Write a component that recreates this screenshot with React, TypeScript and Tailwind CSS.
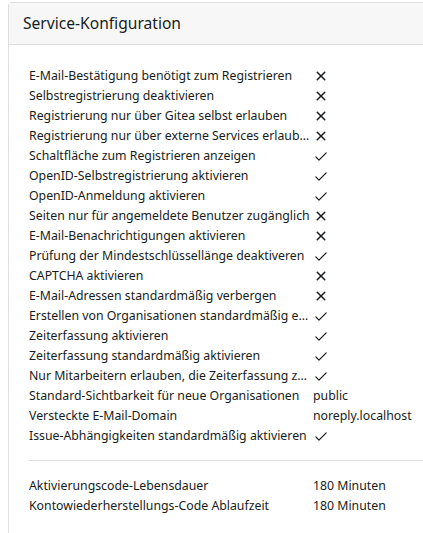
import React from 'react';

type Row = { label: string; value: boolean | string };

const rows: Row[] = [
  { label: 'E-Mail-Bestätigung benötigt zum Registrieren', value: false },
  { label: 'Selbstregistrierung deaktivieren', value: false },
  { label: 'Registrierung nur über Gitea selbst erlauben', value: false },
  { label: 'Registrierung nur über externe Services erlauben', value: false },
  { label: 'Schaltfläche zum Registrieren anzeigen', value: true },
  { label: 'OpenID-Selbstregistrierung aktivieren', value: true },
  { label: 'OpenID-Anmeldung aktivieren', value: true },
  { label: 'Seiten nur für angemeldete Benutzer zugänglich', value: false },
  { label: 'E-Mail-Benachrichtigungen aktivieren', value: false },
  { label: 'Prüfung der Mindestschlüssellänge deaktiveren', value: true },
  { label: 'CAPTCHA aktivieren', value: false },
  { label: 'E-Mail-Adressen standardmäßig verbergen', value: false },
  { label: 'Erstellen von Organisationen standardmäßig erlauben', value: true },
  { label: 'Zeiterfassung aktivieren', value: true },
  { label: 'Zeiterfassung standardmäßig aktivieren', value: true },
  { label: 'Nur Mitarbeitern erlauben, die Zeiterfassung zu nutzen', value: true },
  { label: 'Standard-Sichtbarkeit für neue Organisationen', value: 'public' },
  { label: 'Versteckte E-Mail-Domain', value: 'noreply.localhost' },
  { label: 'Issue-Abhängigkeiten standardmäßig aktivieren', value: true },
];

function CheckIcon() {
  return (
    <svg width="16" height="16" viewBox="0 0 16 16" fill="currentColor">
      <path d="M13.6 4.4a.6.6 0 0 1 0 .85l-7.2 7.2a.6.6 0 0 1-.85 0L2.4 9.3a.6.6 0 0 1 .85-.85L6 11.2l6.75-6.8a.6.6 0 0 1 .85 0Z" />
    </svg>
  );
}

function XIcon() {
  return (
    <svg width="16" height="16" viewBox="0 0 16 16" fill="currentColor">
      <path d="M3.72 3.72a.75.75 0 0 1 1.06 0L8 6.94l3.22-3.22a.75.75 0 1 1 1.06 1.06L9.06 8l3.22 3.22a.75.75 0 1 1-1.06 1.06L8 9.06l-3.22 3.22a.75.75 0 0 1-1.06-1.06L6.94 8 3.72 4.78a.75.75 0 0 1 0-1.06Z" />
    </svg>
  );
}

function InfoRow({ label, value }: Row) {
  return (
    <div className="flex items-center h-5">
      <div className="w-[284px] shrink-0 truncate">{label}</div>
      <div className="flex items-center">
        {typeof value === 'string' ? value : value ? <CheckIcon /> : <XIcon />}
      </div>
    </div>
  );
}

export default function App() {
  return (
    <div
      className="min-h-[533px] bg-white pl-2 pt-[2px] text-[12.3px] text-[#181c21]"
      style={{ fontFamily: '"Noto Sans", sans-serif' }}
    >
      <div className="border-l border-t border-[#dedede] rounded-tl-[4px] min-h-[531px]">
        <div className="bg-[#f7f7f7] border-b border-[#dedede] h-[42px] flex items-center px-[14px] text-[15.6px]">
          Service-Konfiguration
        </div>
        <div className="pl-5 pt-[21px]">
          {rows.map((r) => (
            <InfoRow key={r.label} {...r} />
          ))}
          <div className="border-t border-[#dedede] mt-[14px] mb-[15px]" />
          <InfoRow label="Aktivierungscode-Lebensdauer" value="180 Minuten" />
          <InfoRow label="Kontowiederherstellungs-Code Ablaufzeit" value="180 Minuten" />
        </div>
      </div>
    </div>
  );
}
